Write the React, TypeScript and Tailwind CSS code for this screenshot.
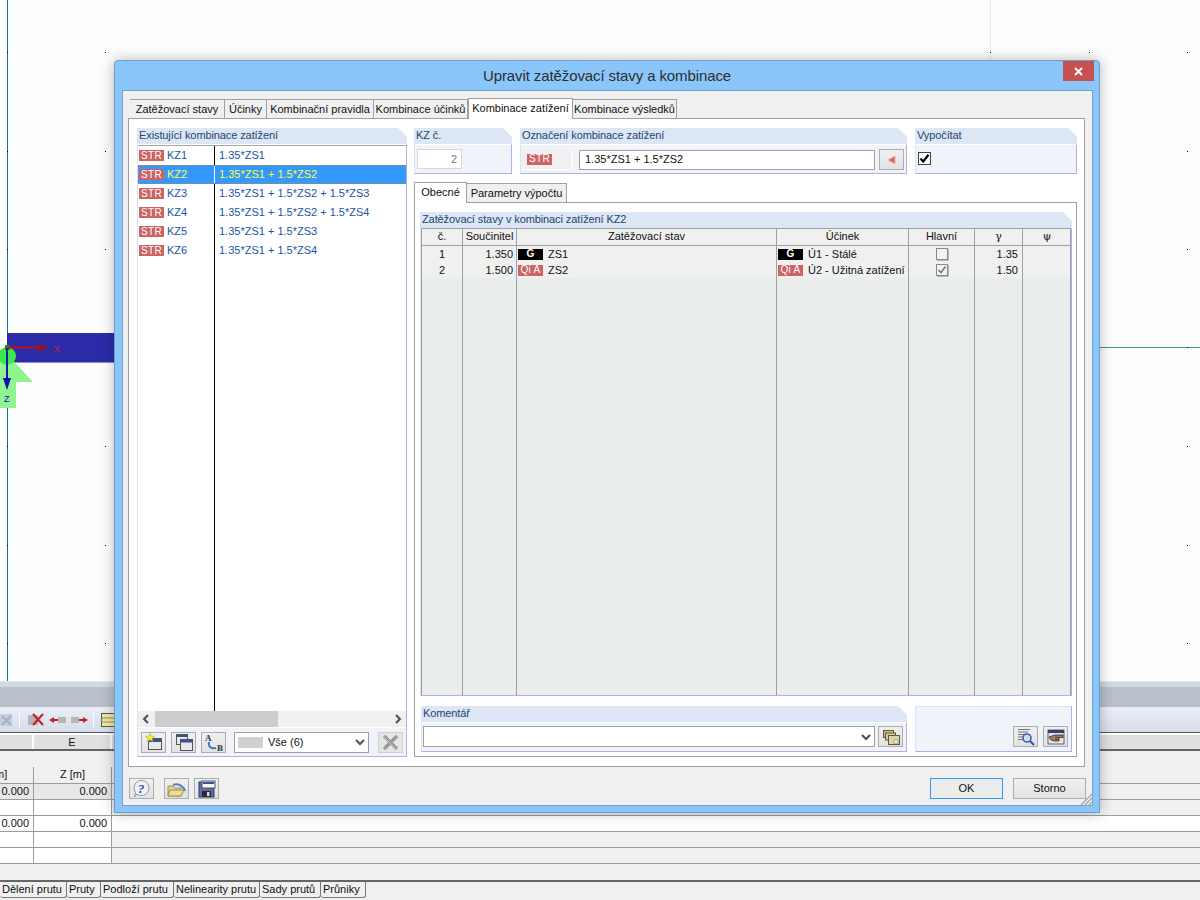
import type { ReactNode } from 'react'

const font = "font-['Liberation_Sans',sans-serif]"

const mainTabs = [
  { label: 'Zatěžovací stavy', w: 'w-[95px]' },
  { label: 'Účinky', w: 'w-[42px]' },
  { label: 'Kombinační pravidla', w: 'w-[107px]' },
  { label: 'Kombinace účinků', w: 'w-[94px]' },
  { label: 'Kombinace zatížení', w: 'w-[105px]', active: true },
  { label: 'Kombinace výsledků', w: 'w-[104px]' },
]

const combos = [
  { id: 'KZ1', value: '1.35*ZS1' },
  { id: 'KZ2', value: '1.35*ZS1 + 1.5*ZS2', selected: true },
  { id: 'KZ3', value: '1.35*ZS1 + 1.5*ZS2 + 1.5*ZS3' },
  { id: 'KZ4', value: '1.35*ZS1 + 1.5*ZS2 + 1.5*ZS4' },
  { id: 'KZ5', value: '1.35*ZS1 + 1.5*ZS3' },
  { id: 'KZ6', value: '1.35*ZS1 + 1.5*ZS4' },
]

const bottomTabs = [
  { label: 'Dělení prutu', w: 'w-[67px]' },
  { label: 'Pruty', w: 'w-[34px]' },
  { label: 'Podloží prutu', w: 'w-[73px]' },
  { label: 'Nelinearity prutu', w: 'w-[86px]' },
  { label: 'Sady prutů', w: 'w-[61px]' },
  { label: 'Průniky', w: 'w-[45px]' },
]

const gridDots = [7, 105, 990, 1089, 1187].flatMap((x) =>
  [52, 151, 249, 347, 446, 545, 643].map((y) => ({ x, y }))
)

const tableCols = 'grid grid-cols-[41px_54px_260px_132px_66px_48px_48px]'

function Group({ title, className, children }: { title: string; className: string; children: ReactNode }) {
  return (
    <div className={`flex flex-col ${className}`}>
      <div className="h-[16px] shrink-0 bg-[#dce6f4] pl-[2px] text-[11px] leading-[15px] tracking-[-0.1px] text-[#23456f] [clip-path:polygon(0_0,calc(100%-9px)_0,100%_9px,100%_100%,0_100%)]">
        {title}
      </div>
      <div className="flex min-h-0 flex-1 flex-col border-r border-b border-l border-t border-r-[#b0b0e6] border-b-[#b0b0e6] border-l-[#d9e4f3] border-t-white bg-[#f0f3f9]">
        {children}
      </div>
    </div>
  )
}

function IconButton({ children, disabled }: { children?: ReactNode; disabled?: boolean }) {
  return (
    <div
      className={`flex h-[21px] w-[25px] shrink-0 items-center justify-center border ${
        disabled ? 'border-[#d0d0d0] bg-[#e6e6e6]' : 'border-[#adadad] bg-gradient-to-b from-[#f0f0f0] to-[#e2e2e2]'
      }`}
    >
      {children}
    </div>
  )
}

function Badge({ label, black, className }: { label: string; black?: boolean; className: string }) {
  return (
    <span
      className={`flex h-[11px] items-center justify-center text-[10px] leading-none tracking-[0.3px] text-white ${
        black ? 'bg-black font-bold' : 'bg-[#cd6464]'
      } ${className}`}
    >
      {label}
    </span>
  )
}

function Chevron({ dir }: { dir: 'left' | 'right' | 'down' }) {
  const pts = dir === 'left' ? '6,1 2,5 6,9' : dir === 'right' ? '3,1 7,5 3,9' : '1,3 5,7 9,3'
  return (
    <svg width="10" height="10" viewBox="0 0 10 10">
      <polyline points={pts} fill="none" stroke="#505050" strokeWidth="2" />
    </svg>
  )
}

function NewIcon() {
  return (
    <svg width="18" height="18" viewBox="0 0 18 18">
      <rect x="3.5" y="5.5" width="13" height="11" fill="#e8e8e8" stroke="#555" />
      <rect x="4" y="6" width="12" height="3" fill="#34549a" />
      <polygon points="5,0 6.3,3 9.5,3.3 7,5.3 7.8,8.5 5,6.8 2.2,8.5 3,5.3 0.5,3.3 3.7,3" fill="#f6e93c" stroke="#b9a416" strokeWidth="0.5" />
    </svg>
  )
}

function WindowsIcon() {
  return (
    <svg width="18" height="18" viewBox="0 0 18 18">
      <rect x="1.5" y="1.5" width="11" height="10" fill="#e8e8e8" stroke="#555" />
      <rect x="2" y="2" width="10" height="2" fill="#34549a" />
      <rect x="5.5" y="6.5" width="12" height="11" fill="#e8e8e8" stroke="#555" />
      <rect x="6" y="7" width="11" height="2.5" fill="#34549a" />
    </svg>
  )
}

function SortIcon() {
  return (
    <svg width="20" height="19" viewBox="0 0 20 19">
      <text x="1" y="8" fontSize="9" fontWeight="700" fontFamily="Liberation Serif" fill="#333">A</text>
      <text x="13" y="18" fontSize="9" fontWeight="700" fontFamily="Liberation Serif" fill="#333">B</text>
      <path d="M5 9 C4 14 7 16 12 15" fill="none" stroke="#3a78c0" strokeWidth="2" />
    </svg>
  )
}

function CrossIcon() {
  return (
    <svg width="17" height="17" viewBox="0 0 17 17">
      <path d="M2 2 L15 15 M15 2 L2 15" stroke="#9a9a9a" strokeWidth="3.4" />
      <path d="M2 3 L14 15" stroke="#c4c4c4" strokeWidth="1" />
    </svg>
  )
}

function HelpIcon() {
  return (
    <svg width="19" height="19" viewBox="0 0 19 19">
      <path d="M9.5 1.5 A7.5 7.5 0 1 1 5 15 L2.5 18 L3.5 13.5 A7.5 7.5 0 0 1 9.5 1.5 Z" fill="#eef2f7" stroke="#8a97a8" />
      <text x="6" y="14" fontSize="13" fontWeight="700" fontStyle="italic" fontFamily="Liberation Serif" fill="#2c4f96">?</text>
    </svg>
  )
}

function FolderIcon() {
  return (
    <svg width="20" height="18" viewBox="0 0 20 18">
      <path d="M6 5 A9 9 0 0 1 18 11" fill="none" stroke="#4d86c8" strokeWidth="2" />
      <path d="M1 6 H6 L8 8 H14 V16 H1 Z" fill="#e3cf85" stroke="#a08f50" />
      <path d="M1 16 L3 10 H17 L14 16 Z" fill="#ecdc9d" stroke="#a08f50" />
    </svg>
  )
}

function SaveIcon() {
  return (
    <svg width="18" height="18" viewBox="0 0 18 18">
      <rect x="1" y="2" width="15" height="15" fill="#5a6cae" stroke="#2e3b70" />
      <rect x="4" y="1" width="13" height="7" fill="#f5f5f5" stroke="#555" />
      <rect x="5" y="2" width="11" height="2" fill="#34549a" />
      <rect x="4" y="11" width="9" height="6" fill="#2a2a2a" />
      <rect x="9" y="12" width="2.5" height="4" fill="#ddd" />
    </svg>
  )
}

function StackIcon() {
  return (
    <svg width="18" height="16" viewBox="0 0 18 16">
      <rect x="1.5" y="1.5" width="10" height="7" fill="#c9bd8d" stroke="#5f5a40" />
      <rect x="3.5" y="4" width="10" height="7" fill="#d6cb9c" stroke="#5f5a40" />
      <rect x="6.5" y="6.5" width="11" height="9" fill="#e0d6ac" stroke="#5f5a40" />
      <rect x="12" y="11" width="4" height="3" fill="#fff" stroke="#5f5a40" strokeWidth="0.5" />
    </svg>
  )
}

function PreviewIcon() {
  return (
    <svg width="18" height="18" viewBox="0 0 18 18">
      <path d="M1 1.5 H13 M1 4 H11 M1 6.5 H7 M1 9 H6 M1 11.5 H6" stroke="#777" />
      <circle cx="10" cy="10" r="4" fill="#cfe0f5" stroke="#3f5fa8" strokeWidth="1.6" />
      <path d="M13 13 L17 17" stroke="#3f5fa8" strokeWidth="2.4" />
    </svg>
  )
}

function HandIcon() {
  return (
    <svg width="18" height="16" viewBox="0 0 18 16">
      <rect x="1" y="1" width="16" height="14" fill="#dfe6f0" stroke="#444" strokeWidth="0.8" />
      <rect x="1" y="1" width="16" height="3" fill="#2d4376" />
      <path d="M2 8 L8 6 H16 V8.5 H12 V12 H7 L4 11 Z" fill="#a67c5b" stroke="#3b2a1e" strokeWidth="0.8" />
      <path d="M8 8.5 H12 M8 10.5 H12" stroke="#3b2a1e" strokeWidth="0.7" />
    </svg>
  )
}

function Workspace() {
  return (
    <div className="relative h-[681px] bg-[#fdfdfd]">
      <div className="absolute left-[7px] top-0 h-[681px] w-px bg-[#0b7c80]" />
      <div className="absolute left-[990px] top-0 h-[60px] w-px bg-[#ececec]" />
      <div className="absolute left-[1100px] right-0 top-[347px] h-px bg-[#3f9a9c]" />
      {gridDots.map((d) => (
        <span key={`${d.x}-${d.y}`} className="absolute h-px w-px bg-black" style={{ left: d.x, top: d.y }} />
      ))}
      <div className="absolute left-[7px] top-[333px] h-[30px] w-[107px] border-b border-b-[#8c8cd8] bg-[#2b2ba8]" />
      <svg className="absolute left-0 top-[330px]" width="70" height="85" viewBox="0 0 70 85">
        <polygon points="7,24 33,52 16,52 16,78 0,78 0,24" fill="#8ff58f" />
        <circle cx="7" cy="26" r="9" fill="#3fe84a" />
        <rect x="5" y="15" width="5" height="5" fill="#138a13" />
        <path d="M8 17.5 H40" stroke="#c01010" strokeWidth="2" />
        <polygon points="38,14 49,17.5 38,21" fill="#a80c0c" />
        <path d="M7 18 V50" stroke="#1616b0" strokeWidth="2" />
        <polygon points="3,48 7,60 11,48" fill="#1010a8" />
        <text x="54" y="22" fontSize="9" fontFamily="Liberation Sans" fill="#d02020">X</text>
        <text x="4" y="72" fontSize="9" fontFamily="Liberation Sans" fill="#1010c0">Z</text>
      </svg>
    </div>
  )
}

function BottomPane() {
  return (
    <div className="text-[11px] text-[#111]">
      <div className="h-[6px] border-t border-t-[#e8e8e8] bg-[#d3d9e2]" />
      <div className="h-[20px] bg-[#b9c0cb]" />
      <div className="flex h-[25px] items-center bg-gradient-to-b from-[#eaeff9] to-[#d6dce8]">
        <svg width="120" height="20" viewBox="0 0 120 20">
          <path d="M0 4 H12 V16 H0 Z" fill="#c9ced8" />
          <path d="M2 6 L11 15 M11 6 L2 15" stroke="#9fb0d0" strokeWidth="2" />
          <path d="M19.5 2 V18 M93.5 2 V18" stroke="#fbfbfb" />
          <rect x="28" y="5" width="10" height="10" fill="#b5b5b5" />
          <path d="M33 4 L43 15 M43 4 L33 15" stroke="#c02020" strokeWidth="2" />
          <rect x="58" y="7" width="8" height="6" fill="#b5b5b5" />
          <path d="M52 10 H58" stroke="#c82020" strokeWidth="2" />
          <polygon points="49,10 54,7 54,13" fill="#c82020" />
          <rect x="71" y="7" width="8" height="6" fill="#b5b5b5" />
          <path d="M79 10 H85" stroke="#c82020" strokeWidth="2" />
          <polygon points="88,10 83,7 83,13" fill="#c82020" />
          <rect x="101.5" y="3.5" width="16" height="13" fill="#f2ec9a" stroke="#555" />
          <path d="M101 8 H118 M101 12 H118" stroke="#888" />
        </svg>
      </div>
      <div className="h-[1px] bg-[#555]" />
      <div className="h-[2px] bg-white" />
      <div className="flex h-[14px] bg-[#e0e0e0]">
        <div className="w-[34px] border-r-2 border-r-white" />
        <div className="w-[78px] border-r-2 border-r-white text-center leading-[14px]">E</div>
      </div>
      <div className="h-[2px] bg-[#666]" />
      <div className="h-[16px] overflow-hidden bg-[#f0f0f0]" />
      <div className="flex h-[17px] border-b border-b-[#9c9c9c] bg-[#f0f0f0]">
        <span className="w-[34px] overflow-hidden border-r border-r-[#9c9c9c] leading-[14px]">
          <span className="-ml-[8px] inline-block">[m]</span>
        </span>
        <span className="w-[78px] border-r border-r-[#9c9c9c] text-center leading-[14px]">Z [m]</span>
      </div>
      {[
        { left: 'bg-[#e8e8e8]', right: 'bg-[#f0f0f0]', values: true },
        { left: 'bg-white', right: 'bg-[#f0f0f0]' },
        { left: 'bg-white', right: 'bg-white', values: true },
        { left: 'bg-white', right: 'bg-[#f0f0f0]' },
        { left: 'bg-white', right: 'bg-[#f0f0f0]' },
      ].map((row, i) => (
        <div key={i} className="flex h-[16px] border-b border-b-[#9c9c9c] leading-[15px]">
          <div className={`w-[34px] border-r border-r-[#9c9c9c] pr-[4px] text-right ${row.left}`}>{row.values && '0.000'}</div>
          <div className={`w-[78px] border-r border-r-[#9c9c9c] pr-[4px] text-right ${row.left}`}>{row.values && '0.000'}</div>
          <div className={`flex-1 ${row.right}`} />
        </div>
      ))}
      <div className="h-[18px] border-b-2 border-b-[#666] bg-[#f0f0f0]" />
      <div className="flex h-[19px] border-b border-b-[#dedede] bg-[#f0f0f0]">
        {bottomTabs.map((tab) => (
          <div
            key={tab.label}
            className={`${tab.w} h-[16px] shrink-0 rounded-b-[3px] border-r border-b border-r-[#777] border-b-[#777] bg-[#f0f0f0] pl-[2px] leading-[15px]`}
          >
            {tab.label}
          </div>
        ))}
      </div>
    </div>
  )
}

function CombinationList() {
  return (
    <Group title="Existující kombinace zatížení" className="h-[629px] w-[270px] shrink-0">
      <div className="flex min-h-0 flex-1 flex-col border-t border-t-[#a8a8a8] bg-white">
        {combos.map((c) => (
          <div
            key={c.id}
            className={`flex h-[19px] shrink-0 items-center text-[11px] ${
              c.selected ? 'border-y border-dotted border-y-[#c08040] bg-[#3399ff] text-[#ffff33]' : 'text-[#2055a8]'
            }`}
          >
            <div className={`flex h-full w-[77px] shrink-0 items-center border-r ${c.selected ? 'border-r-white' : 'border-r-black'}`}>
              <Badge label="STR" className="ml-px w-[25px]" />
              <span className="ml-[3px]">{c.id}</span>
            </div>
            <span className="ml-[4px]">{c.value}</span>
          </div>
        ))}
        <div className="flex-1">
          <div className="h-full w-[77px] border-r border-r-black" />
        </div>
      </div>
      <div className="flex h-[16px] shrink-0 items-center bg-[#f0f0f0]">
        <div className="flex w-[17px] shrink-0 justify-center">
          <Chevron dir="left" />
        </div>
        <div className="h-[16px] w-[123px] shrink-0 bg-[#cdcdcd]" />
        <div className="flex flex-1 justify-end pr-[3px]">
          <Chevron dir="right" />
        </div>
      </div>
      <div className="flex h-[29px] shrink-0 items-center border-t border-t-white pl-[3px]">
        <IconButton><NewIcon /></IconButton>
        <div className="ml-[5px]"><IconButton><WindowsIcon /></IconButton></div>
        <div className="ml-[5px]"><IconButton><SortIcon /></IconButton></div>
        <div className="ml-[8px] flex h-[21px] w-[135px] items-center border border-[#a0a0a0] bg-white pl-[3px] pr-[3px] text-[11px] text-[#111]">
          <span className="h-[11px] w-[25px] bg-[#d0d0d0]" />
          <span className="ml-[5px] flex-1">Vše (6)</span>
          <Chevron dir="down" />
        </div>
        <div className="ml-[9px]"><IconButton disabled><CrossIcon /></IconButton></div>
      </div>
    </Group>
  )
}

function LoadTable() {
  return (
    <Group title="Zatěžovací stavy v kombinaci zatížení KZ2" className="ml-[5px] mt-[9px] h-[484px] w-[652px]">
      <div className="-mt-px flex min-h-0 flex-1 flex-col border-x border-x-[#a0a0a0] border-t border-t-[#a0a0a0] text-[11px] text-[#111]">
        <div className={`${tableCols} h-[17px] shrink-0 border-b border-b-[#a0a0a0] bg-[#f0f0f0] text-center leading-[15px]`}>
          <div className="border-r border-r-[#a0a0a0]">č.</div>
          <div className="border-r border-r-[#a0a0a0]">Součinitel</div>
          <div className="border-r border-r-[#a0a0a0]">Zatěžovací stav</div>
          <div className="border-r border-r-[#a0a0a0]">Účinek</div>
          <div className="border-r border-r-[#a0a0a0]">Hlavní</div>
          <div className="border-r border-r-[#a0a0a0] font-['DejaVu_Serif',serif]">γ</div>
          <div className="font-['DejaVu_Serif',serif]">ψ</div>
        </div>
        {[
          { no: '1', factor: '1.350', load: 'ZS1', tag: 'G', black: true, effect: 'Ú1 - Stálé', gamma: '1.35' },
          { no: '2', factor: '1.500', load: 'ZS2', tag: 'Qi A', effect: 'Ú2 - Užitná zatížení', gamma: '1.50', main: true },
        ].map((r) => (
          <div key={r.no} className={`${tableCols} h-[16px] shrink-0 bg-[#f0f0f0] leading-[16px]`}>
            <div className="border-r border-r-[#a0a0a0] text-center">{r.no}</div>
            <div className="border-r border-r-[#a0a0a0] pr-[3px] text-right">{r.factor}</div>
            <div className="flex items-center border-r border-r-[#a0a0a0] pl-[1px]">
              <Badge label={r.tag} black={r.black} className="w-[25px]" />
              <span className="ml-[5px]">{r.load}</span>
            </div>
            <div className="flex items-center border-r border-r-[#a0a0a0] pl-[1px]">
              <Badge label={r.tag} black={r.black} className="w-[25px]" />
              <span className="ml-[5px]">{r.effect}</span>
            </div>
            <div className="flex items-center justify-center border-r border-r-[#a0a0a0]">
              <svg width="14" height="14" viewBox="0 0 14 14">
                <rect x="1.5" y="1.5" width="11" height="11" fill="#f2f2f2" stroke="#8a8a8a" />
                <path d="M13.5 2 V13.5 H2" fill="none" stroke="#b8b8b8" />
                {r.main && <path d="M3.5 7 L6 9.5 L10.5 3.5" fill="none" stroke="#777" strokeWidth="1.6" />}
              </svg>
            </div>
            <div className="border-r border-r-[#a0a0a0] pr-[4px] text-right">{r.gamma}</div>
            <div />
          </div>
        ))}
        <div className={`${tableCols} min-h-0 flex-1 bg-[#e9eeec]`}>
          {[0, 1, 2, 3, 4, 5].map((i) => (
            <div key={i} className="border-r border-r-[#a0a0a0]" />
          ))}
        </div>
      </div>
    </Group>
  )
}

function CombinationDetail() {
  return (
    <div className="ml-[7px] flex w-[663px] flex-col">
      <div className="flex h-[46px] gap-[8px]">
        <Group title="KZ č." className="w-[98px]">
          <div className="ml-[2px] mt-[4px] flex h-[20px] w-[45px] items-center justify-end border border-[#d8d8d8] bg-white pr-[4px] text-[11px] text-[#777]">
            2
          </div>
        </Group>
        <Group title="Označení kombinace zatížení" className="w-[387px]">
          <div className="mt-[4px] flex items-center">
            <div className="ml-[1px] flex h-[20px] w-[50px] items-center border-r border-b border-r-white border-b-white bg-[#f0f0f0] pl-[5px]">
              <Badge label="STR" className="w-[25px]" />
            </div>
            <div className="ml-[7px] flex h-[20px] w-[296px] items-center border border-[#a0a0a0] bg-white pl-[5px] text-[11px] text-[#111]">
              1.35*ZS1 + 1.5*ZS2
            </div>
            <div className="ml-[4px]">
              <IconButton>
                <svg width="9" height="10" viewBox="0 0 9 10">
                  <polygon points="8,1 8,9 1,5" fill="#e66060" stroke="#e8b0b0" />
                </svg>
              </IconButton>
            </div>
          </div>
        </Group>
        <Group title="Vypočítat" className="w-[162px]">
          <div className="ml-[2px] mt-[7px] flex h-[13px] w-[13px] items-center justify-center border border-[#444] bg-white">
            <svg width="11" height="11" viewBox="0 0 11 11">
              <path d="M1.5 5.5 L4.2 8.5 L9.5 1.8" fill="none" stroke="#000" strokeWidth="2.2" />
            </svg>
          </div>
        </Group>
      </div>

      <div className="mt-[8px] flex h-[20px] items-end text-[11px] text-[#111]">
        <div className="relative z-10 -mb-px h-[21px] w-[53px] border-x border-t border-x-[#a0a0a0] border-t-[#a0a0a0] bg-white text-center leading-[18px]">
          Obecné
        </div>
        <div className="h-[19px] w-[100px] border-r border-t border-r-[#a0a0a0] border-t-[#a0a0a0] bg-[#f0f0f0] text-center leading-[18px]">
          Parametry výpočtu
        </div>
      </div>

      <div className="h-[555px] border border-[#a0a0a0] bg-white">
        <LoadTable />
        <div className="ml-[6px] mt-[10px] flex h-[46px] gap-[8px]">
          <Group title="Komentář" className="w-[486px]">
            <div className="mt-[3px] flex items-center">
              <div className="ml-[1px] flex h-[21px] w-[452px] items-center justify-end border border-[#a0a0a0] bg-white pr-[3px]">
                <Chevron dir="down" />
              </div>
              <div className="ml-[3px]"><IconButton><StackIcon /></IconButton></div>
            </div>
          </Group>
          <div className="flex h-[46px] w-[157px] items-end justify-end gap-[5px] border border-r-[#b0b0e6] border-b-[#b0b0e6] border-l-[#d9e4f3] border-t-[#d9e4f3] bg-[#f0f3f9] pb-[4px] pr-[3px]">
            <IconButton><PreviewIcon /></IconButton>
            <IconButton><HandIcon /></IconButton>
          </div>
        </div>
      </div>
    </div>
  )
}

function Dialog() {
  return (
    <div className="absolute left-[114px] top-[60px] flex h-[753px] w-[986px] flex-col rounded-t-[4px] border border-[#6a9fd0] bg-[#8bc6fb] shadow-[0_0_14px_rgba(0,0,0,0.28)]">
      <div className="relative h-[29px] shrink-0 text-center text-[15px] leading-[29px] tracking-[-0.1px] text-[#2e2e2e]">
        Upravit zatěžovací stavy a kombinace
        <div className="absolute right-[5px] top-0 flex h-[20px] w-[31px] items-center justify-center bg-[#c75050]">
          <svg width="11" height="11" viewBox="0 0 11 11">
            <path d="M2 2 L9 9 M9 2 L2 9" stroke="#fff" strokeWidth="2" />
          </svg>
        </div>
      </div>
      <div className="relative ml-[7px] mr-[6px] flex h-[716px] flex-col border border-[#6ea3d4] bg-[#f0f0f0] pl-[5px] pr-[7px]">
        <div className="mt-[7px] flex h-[20px] shrink-0 items-end pl-[2px] text-[11px] text-[#111]">
          {mainTabs.map((tab) => (
            <div
              key={tab.label}
              className={
                tab.active
                  ? `${tab.w} relative z-10 -mb-px h-[21px] shrink-0 border-x border-t border-x-[#a0a0a0] border-t-[#a0a0a0] bg-white text-center leading-[18px]`
                  : `${tab.w} h-[19px] shrink-0 border-r border-t border-r-[#a0a0a0] border-t-[#a0a0a0] bg-[#f0f0f0] text-center leading-[19px]`
              }
            >
              {tab.label}
            </div>
          ))}
        </div>
        <div className="flex h-[649px] shrink-0 border border-[#a0a0a0] bg-white pl-[8px] pt-[9px]">
          <CombinationList />
          <CombinationDetail />
        </div>
        <div className="flex flex-1 items-start pl-[1px] pt-[11px] text-[11px] text-[#111]">
          <IconButton><HelpIcon /></IconButton>
          <div className="ml-[10px]"><IconButton><FolderIcon /></IconButton></div>
          <div className="ml-[5px]"><IconButton><SaveIcon /></IconButton></div>
          <div className="ml-auto mr-[-1px] flex gap-[10px]">
            <div className="flex h-[21px] w-[73px] items-center justify-center border border-[#3399ff] bg-[#ececec]">OK</div>
            <div className="flex h-[21px] w-[73px] items-center justify-center border border-[#adadad] bg-gradient-to-b from-[#f0f0f0] to-[#e2e2e2]">Storno</div>
          </div>
        </div>
        <svg className="absolute bottom-0 right-0" width="12" height="12" viewBox="0 0 12 12">
          <path d="M12 1 L1 12 M12 5 L5 12 M12 9 L9 12" stroke="#9a9a9a" strokeWidth="1.2" />
        </svg>
      </div>
    </div>
  )
}

export default function App() {
  return (
    <div className={`relative h-[900px] w-[1200px] overflow-hidden bg-[#f0f0f0] ${font}`}>
      <Workspace />
      <BottomPane />
      <Dialog />
    </div>
  )
}
